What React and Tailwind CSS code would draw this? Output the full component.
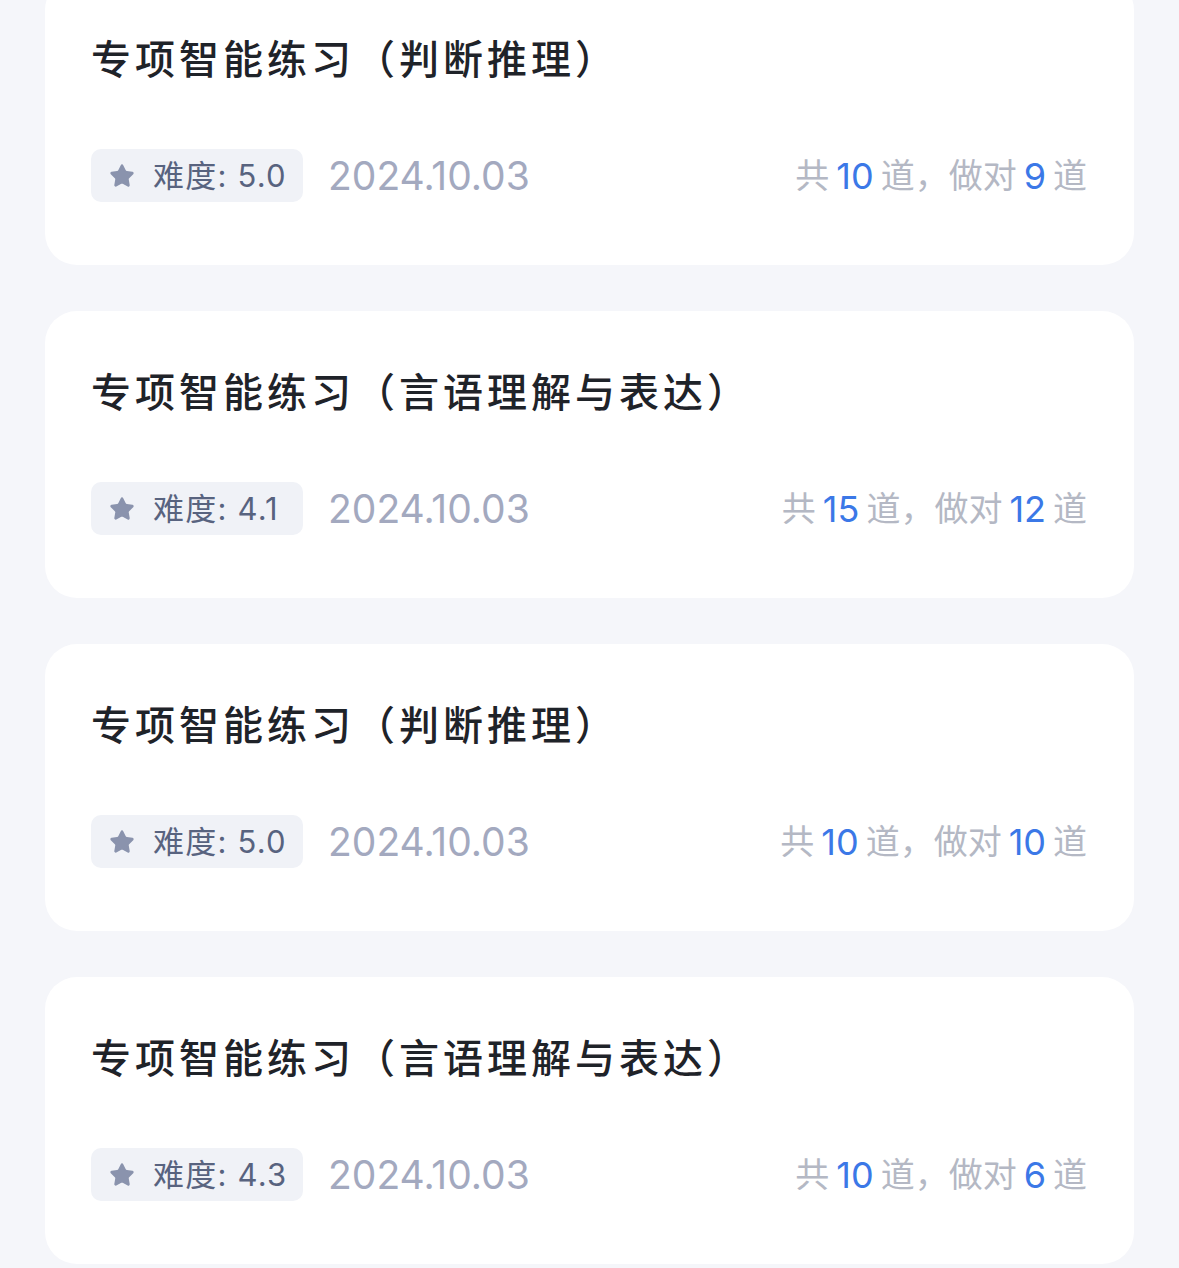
import { Star } from 'lucide-react';

const items = [
  { title: '专项智能练习（判断推理）', level: '5.0', date: '2024.10.03', total: 10, right: 9 },
  { title: '专项智能练习（言语理解与表达）', level: '4.1', date: '2024.10.03', total: 15, right: 12 },
  { title: '专项智能练习（判断推理）', level: '5.0', date: '2024.10.03', total: 10, right: 10 },
  { title: '专项智能练习（言语理解与表达）', level: '4.3', date: '2024.10.03', total: 10, right: 6 },
];

const font = { fontFamily: 'Inter, "Noto Sans CJK SC", sans-serif' };

const PracticeCard = ({ item }) => (
  <div className="bg-white rounded-[32px] pl-[46px] pr-[47px] pt-[54px] pb-[63px]">
    <h2 className="h-[56px] leading-[56px] text-[40px] font-medium text-[#1f2329] tracking-[4px]">
      {item.title}
    </h2>
    <div className="mt-[61px] h-[53px] flex items-center">
      <div className="h-[53px] w-[212px] rounded-[10px] bg-[#f0f2f7] flex items-center pl-[18px]">
        <Star size={26} fill="#8a93ad" stroke="#8a93ad" strokeWidth={1.5} strokeLinejoin="round" />
        <span className="ml-[18px] text-[31px] text-[#58637f] leading-none tracking-[1.2px]">
          难度: {item.level}
        </span>
      </div>
      <span className="ml-[25px] text-[39px] text-[#a3a9bf] leading-none">{item.date}</span>
      <div className="ml-auto text-[34px] text-[#b4b8c4] leading-none flex items-center">
        <span>共</span>
        <span className="mx-[7px] text-[36px] text-[#3b78e7]">{item.total}</span>
        <span>道，做对</span>
        <span className="mx-[7px] text-[36px] text-[#3b78e7]">{item.right}</span>
        <span>道</span>
      </div>
    </div>
  </div>
);

export default function App() {
  return (
    <div className="min-h-[1268px] bg-[#f5f6fa] overflow-hidden" style={font}>
      <div className="-mt-[22px] px-[45px] flex flex-col gap-[46px]">
        {items.map((item, i) => (
          <PracticeCard key={i} item={item} />
        ))}
      </div>
    </div>
  );
}
